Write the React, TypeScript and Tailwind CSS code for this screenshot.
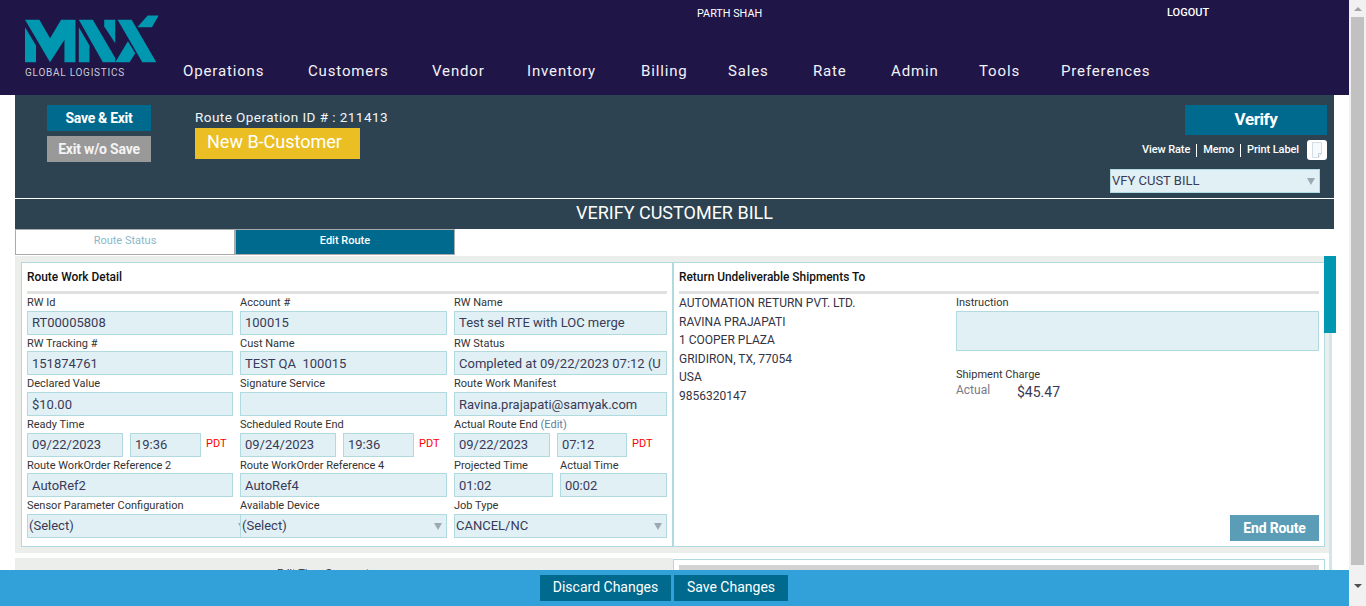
import type { ReactNode } from "react";

const NAV = [
  { label: "Operations", w: "w-[81px]" },
  { label: "Customers", w: "w-[80px]" },
  { label: "Vendor", w: "w-[51px]" },
  { label: "Inventory", w: "w-[70px]" },
  { label: "Billing", w: "w-[43px]" },
  { label: "Sales", w: "w-[41px]" },
  { label: "Rate", w: "w-[34px]" },
  { label: "Admin", w: "w-[44px]" },
  { label: "Tools", w: "w-[38px]" },
  { label: "Preferences", w: "w-[90px]" },
];
const ADDRESS = ["AUTOMATION RETURN PVT. LTD.", "RAVINA PRAJAPATI", "1 COOPER PLAZA", "GRIDIRON, TX, 77054", "USA", "9856320147"];

function Logo() {
  return (
    <svg width="134" height="48" viewBox="75 45 401 141" className="block" fill="#0097b0">
      <polygon points="75,58 118,58 150,113 183,58 226,58 226,185 193,185 193,118 150,185" />
      <polygon points="75,80 108,135 108,185 75,185" />
      <polygon points="236,58 278,58 345,172 345,185 308,185" />
      <polygon points="236,80 268,135 268,185 236,185" />
      <polygon points="312,58 345,58 345,128 312,78" />
      <polygon points="352,58 394,58 468,185 426,185" />
      <polygon points="345,185 383,122 405,158 388,185" />
      <polygon points="411,80 442,45 475,45 455,80" />
    </svg>
  );
}

function Arrow() {
  return <span className="absolute right-[4px] top-[8px] h-0 w-0 border-x-[4px] border-t-[7px] border-x-transparent border-t-[#9aa9b3]" />;
}

function Input({ value, className = "" }: { value?: string; className?: string }) {
  return (
    <div className={`h-6 shrink-0 border border-[#b0dae0] bg-[#e0f0f4] pl-1 pr-1 text-[13px] leading-[22px] text-[#3a3a58] ${className}`}>
      <div className="overflow-hidden whitespace-pre">{value}</div>
    </div>
  );
}

function Select({ value, className = "" }: { value: string; className?: string }) {
  return (
    <div className={`relative h-6 border border-[#b0dae0] bg-[#e0f0f4] pl-[1px] text-[13px] leading-[22px] text-[#3a3a58] ${className}`}>
      {value}
      <Arrow />
    </div>
  );
}

function Field({ label, low, children }: { label: ReactNode; low?: boolean; children: ReactNode }) {
  return (
    <div className="flex min-w-0 flex-col justify-end">
      <div className={`whitespace-nowrap text-[11px] leading-[15px] text-[#333333] ${low ? "" : "mb-[1px]"}`}>{label}</div>
      {children}
    </div>
  );
}

function TimeField({ label, date, time, timeW = "w-[71px]" }: { label: ReactNode; date: string; time: string; timeW?: string }) {
  return (
    <Field label={label}>
      <div className="flex items-center">
        <Input value={date} className="w-[96px]" />
        <Input value={time} className={`ml-[7px] ${timeW}`} />
        <span className="mb-[2px] ml-[5px] text-[11px] text-[#ff0000]">PDT</span>
      </div>
    </Field>
  );
}

function PanelTitle({ children }: { children: ReactNode }) {
  return (
    <div className="flex h-[31px] shrink-0 items-center border-b-[3px] border-[#e0e0e0] pt-[2px] text-[11.9px] font-medium text-[#111111]">
      {children}
    </div>
  );
}

function RouteWorkDetail() {
  return (
    <div className="w-[650px] shrink-0 px-[5px]">
      <PanelTitle>Route Work Detail</PanelTitle>
      <div className="grid grid-cols-[206px_207px_213px] grid-rows-[41px_40px_41px_41px_40px_41px] gap-x-[7px]">
        <Field label="RW Id"><Input value="RT00005808" /></Field>
        <Field label="Account #"><Input value="100015" /></Field>
        <Field label="RW Name"><Input value="Test sel RTE with LOC merge" /></Field>

        <Field low label="RW Tracking #"><Input value="151874761" className="pt-px" /></Field>
        <Field low label="Cust Name"><Input value="TEST QA  100015" className="pt-px" /></Field>
        <Field low label="RW Status"><Input value="Completed at 09/22/2023 07:12 (UTC)" className="pr-[5px] pt-px" /></Field>

        <Field label="Declared Value"><Input value="$10.00" className="pt-px" /></Field>
        <Field label="Signature Service"><Input /></Field>
        <Field label="Route Work Manifest"><Input value="Ravina.prajapati@samyak.com" className="pt-px" /></Field>

        <TimeField label="Ready Time" date="09/22/2023" time="19:36" />
        <TimeField label="Scheduled Route End" date="09/24/2023" time="19:36" />
        <TimeField
          label={<>Actual Route End <span className="text-[#5d7f99]">(Edit)</span></>}
          date="09/22/2023"
          time="07:12"
          timeW="w-[70px]"
        />

        <Field low label="Route WorkOrder Reference 2"><Input value="AutoRef2" className="pt-px" /></Field>
        <Field low label="Route WorkOrder Reference 4"><Input value="AutoRef4" className="pt-px" /></Field>
        <div className="flex gap-[7px]">
          <div className="flex w-[99px] flex-col justify-end"><Field low label="Projected Time"><Input value="01:02" className="pt-px" /></Field></div>
          <div className="flex w-[107px] flex-col justify-end"><Field low label="Actual Time"><Input value="00:02" className="pt-px" /></Field></div>
        </div>

        <Field label="Sensor Parameter Configuration"><Select value="(Select)" className="w-[224px]" /></Field>
        <Field label="Available Device"><Select value="(Select)" /></Field>
        <Field label="Job Type"><Select value="CANCEL/NC" /></Field>
      </div>
    </div>
  );
}

function ReturnPanel() {
  return (
    <div className="flex w-[652px] shrink-0 flex-col border-l-2 border-[#b0dae0] px-[5px] pb-[5px]">
      <PanelTitle>Return Undeliverable Shipments To</PanelTitle>
      <div className="flex flex-1">
        <div className="w-[277px] shrink-0 text-[12px] leading-[18.5px] text-[#333344]">
          {ADDRESS.map((line) => (
            <div key={line}>{line}</div>
          ))}
        </div>
        <div className="flex-1">
          <div className="pt-[1px] text-[11px] leading-[15px] text-[#333333]">Instruction</div>
          <div className="mt-[1px] h-10 border border-[#b0dae0] bg-[#e0f0f4]" />
          <div className="mt-[16px] text-[11px] leading-[15px] text-[#333333]">Shipment Charge</div>
          <div className="flex items-start">
            <span className="-mt-px w-[61px] text-[12px] text-[#7a7a85]">Actual</span>
            <span className="text-[14px] text-[#3a3a58]">$45.47</span>
          </div>
        </div>
      </div>
      <div className="flex h-[26px] w-[89px] items-center justify-center self-end bg-[#5b9db7] text-[14px] font-bold tracking-[-0.2px] text-white">
        End Route
      </div>
    </div>
  );
}

function NoteIcon() {
  return (
    <div className="flex h-5 w-5 items-center justify-center rounded-[3px] bg-white">
      <svg width="12" height="16" viewBox="0 0 12 16" fill="none">
        <path d="M1.5 0.5H10.5V11.5L7.5 15.5H1.5Z" fill="#f7fafc" stroke="#d5dde6" />
        <path d="M7.5 15.5V11.5H10.5" stroke="#c3cfd9" />
      </svg>
    </div>
  );
}

function ScrollBar() {
  return (
    <div className="flex h-[606px] w-[17px] shrink-0 flex-col items-center bg-[#f1f1f1]">
      <div className="flex h-[17px] items-center justify-center">
        <span className="h-0 w-0 border-x-[4px] border-b-[4px] border-x-transparent border-b-[#a3a3a3]" />
      </div>
      <div className="h-[548px] w-[13px] bg-[#c1c1c1]" />
      <div className="flex flex-1 items-center justify-center">
        <span className="h-0 w-0 border-x-[4px] border-t-[4px] border-x-transparent border-t-[#505050]" />
      </div>
    </div>
  );
}

export default function App() {
  return (
    <div className="flex h-[606px] w-[1366px] overflow-hidden bg-white font-['Roboto',sans-serif]">
      <div className="relative h-[606px] w-[1349px] shrink-0 overflow-hidden">
        {/* top bar */}
        <header className="flex h-[95px] bg-[#201547] pl-[25px]">
          <div className="w-[134px] shrink-0 pt-[15px]">
            <Logo />
            <div className="mt-[4px] whitespace-nowrap text-[10px] leading-[12px] tracking-[0.75px] text-[#c9c9d2]">GLOBAL LOGISTICS</div>
          </div>
          <div className="ml-[24px] flex flex-1 flex-col">
            <div className="flex h-[61px] pt-[6px] leading-[14px] text-white">
              <span className="ml-[514px] mt-[1px] w-[65px] whitespace-nowrap text-[10.8px]">PARTH SHAH</span>
              <span className="ml-[405px] text-[11px] font-medium">LOGOUT</span>
            </div>
            <nav className="flex gap-[44px] whitespace-nowrap text-[15px] leading-[20px] tracking-[0.85px] text-[#f2f2f7]">
              {NAV.map((item) => (
                <span key={item.label} className={item.w}>{item.label}</span>
              ))}
            </nav>
          </div>
        </header>

        <div className="ml-[15px] w-[1319px]">
          {/* route header */}
          <section className="bg-[#2d4351] text-white">
            <div className="flex h-[104px] border-b border-white pl-[32px] pr-[7px] pt-[10px]">
              <div className="flex w-[104px] flex-col gap-[5px]">
                <div className="flex h-[26px] items-center justify-center bg-[#006a8e] text-[14px] font-bold tracking-[-0.3px]">Save &amp; Exit</div>
                <div className="flex h-[26px] items-center justify-center bg-[#999999] text-[14px] font-bold tracking-[-0.2px] text-[#f4f4f4]">Exit w/o Save</div>
              </div>
              <div className="ml-[44px]">
                <div className="h-[23px] whitespace-nowrap text-[13.5px] leading-[24px] tracking-[0.45px] text-[#f2f6f8]">Route Operation ID # : 211413</div>
                <div className="flex h-[31px] w-[165px] items-center bg-[#ebbf24] pb-1 pl-3 text-[18px] text-white">New B-Customer</div>
              </div>
              <div className="ml-auto flex flex-col items-end">
                <div className="flex h-[30px] w-[142px] items-center justify-center bg-[#006a8e] text-[17px] font-bold tracking-[-0.4px]">Verify</div>
                <div className="mt-[5px] flex h-5 items-center text-[11px] font-medium tracking-[-0.1px]">
                  <span className="pt-px">View Rate</span>
                  <span className="mx-[6px] h-[13px] w-px bg-white" />
                  <span className="pt-px">Memo</span>
                  <span className="mx-[6px] h-[13px] w-px bg-white" />
                  <span className="pt-px">Print Label</span>
                  <span className="ml-2"><NoteIcon /></span>
                </div>
                <div className="relative mr-[7px] mt-[9px] h-6 w-[210px] border border-[#b0dae0] bg-[#e0f0f4] pl-[1px] text-[13px] leading-[22px] text-[#3a3a58]">
                  VFY CUST BILL
                  <Arrow />
                </div>
              </div>
            </div>
            <h1 className="flex h-[30px] items-center justify-center pb-[3px] text-[18px] font-normal">VERIFY CUSTOMER BILL</h1>
          </section>

          {/* tabs */}
          <div className="flex h-[26px] text-[11px]">
            <div className="flex w-[220px] items-center justify-center border border-[#aaaaaa] bg-white pb-[2px] text-[#8bb8c9]">Route Status</div>
            <div className="flex w-[220px] items-center justify-center border border-[#aaaaaa] bg-[#006a8e] pb-[2px] font-medium text-white">Edit Route</div>
          </div>

          <div className="relative mt-px w-[1319px]">
            <div className="w-[1314px] bg-[#eceeec] pb-[6px] pl-[6px] pr-[4px] pt-[6px]">
              <div className="flex h-[285px] w-[1304px] border border-[#b0dae0] bg-white">
                <RouteWorkDetail />
                <ReturnPanel />
              </div>
            </div>

            {/* next section, cut off by the footer */}
            <div className="mt-[5px] flex h-[40px] w-[1314px]">
              <div className="w-[658px] bg-[#eceeec] pl-[262px] pt-[8px] text-[11px] leading-[15px] text-[#333333]">Edit Time Segment</div>
              <div className="mt-px w-[652px] border-x border-t border-[#b0dae0] bg-white px-[5px] pt-[5px]">
                <div className="h-6 w-[640px] bg-[#d3d3d3]" />
              </div>
            </div>

            {/* inner scrollbar */}
            <div className="absolute bottom-0 right-[2px] top-0 w-[3px] bg-[#cfe6ee]" />
            <div className="absolute right-[-2px] top-0 h-[77px] w-[12px] bg-[#0097b0]" />
          </div>
        </div>

        {/* sticky footer */}
        <footer className="absolute bottom-0 left-0 flex h-9 w-[1349px] gap-[3px] bg-[#33a1d9] pl-[540px] pt-[5px] text-[14px] text-white">
          <div className="flex h-[26px] w-[131px] items-center justify-center bg-[#006a8e] pb-[2px]">Discard Changes</div>
          <div className="flex h-[26px] w-[114px] items-center justify-center bg-[#006a8e] pb-[2px]">Save Changes</div>
        </footer>
      </div>
      <ScrollBar />
    </div>
  );
}
